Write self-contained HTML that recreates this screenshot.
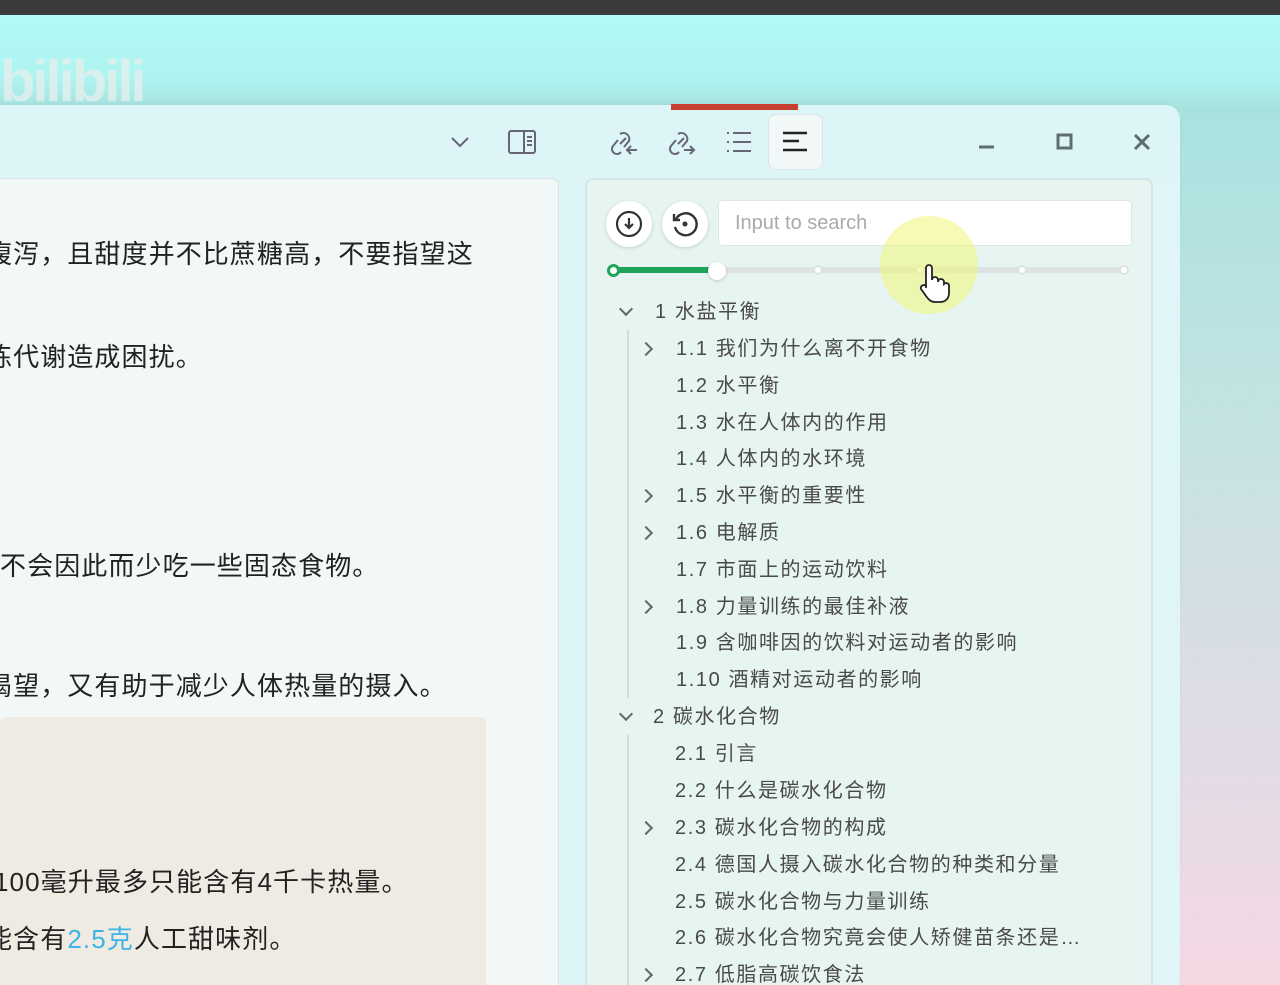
<!DOCTYPE html>
<html><head><meta charset="utf-8"><style>
*{margin:0;padding:0;box-sizing:border-box}
html{width:1280px;height:985px;overflow:hidden}
body{width:1280px;height:985px;overflow:hidden;position:relative;font-family:"Liberation Sans","Noto Sans CJK SC",sans-serif;background:linear-gradient(180deg,#b2fbf8 0%,#aef3f0 8%,#a8e2df 11%,#c6e3e3 45%,#dcdce6 70%,#f5d8e4 100%)}
.top{position:absolute;left:0;top:0;width:1280px;height:15px;background:#3a3a3a}
.logo{position:absolute;left:0;top:48px;font-size:58px;font-weight:bold;color:#e4f0ee;letter-spacing:-3px;opacity:.8}
.win{position:absolute;left:0;top:105px;width:1180px;height:880px;background:#def5f8;border-top-right-radius:14px;box-shadow:-2px 0 6px rgba(0,0,0,.08)}
.red{position:absolute;left:671px;top:104px;width:127px;height:6px;background:#c8402f}
.ico{position:absolute}
.left{position:absolute;left:-10px;top:178px;width:569px;height:820px;background:#f2f7f8;border:1px solid #d6e4e6;border-radius:8px}
.lt{position:absolute;font-size:26px;color:#222;white-space:nowrap;letter-spacing:1.1px}
.beige{position:absolute;left:0;top:717px;width:486px;height:280px;background:#efebe2;border-radius:6px}
.right{position:absolute;left:585px;top:178px;width:568px;height:820px;background:#e7f5f2;border:2px solid #d3e6e6;border-radius:8px}
.cb{position:absolute;top:201px;width:46px;height:46px;border-radius:50%;background:#fff;box-shadow:0 1px 4px rgba(0,0,0,.15)}
.search{position:absolute;left:718px;top:200px;width:414px;height:46px;background:#fff;border:1px solid #dde6e6;border-radius:4px;font-size:20px;color:#aaa;padding:11px 16px}
.tr{position:absolute;font-size:20px;color:#4a4a4a;white-space:nowrap;line-height:24px;letter-spacing:1.6px}
.chev{position:absolute;width:10px;height:10px;border-right:2px solid #666;border-bottom:2px solid #666}
</style></head><body>
<div class="top"></div>
<div class="logo">bilibili</div>
<div class="win"></div>
<div class="red"></div>
<svg class="ico" style="left:449px;top:132px" width="22" height="20"><path d="M3 6 L11 14 L19 6" stroke="#667" stroke-width="2" fill="none"/></svg>
<svg class="ico" style="left:507px;top:129px" width="30" height="26"><rect x="2" y="2" width="26" height="22" rx="2" stroke="#667" stroke-width="2" fill="none"/><path d="M17 2V24M20 8h5M20 12h5M20 16h5" stroke="#667" stroke-width="2"/></svg>
<svg class="ico" style="left:606px;top:126px" width="34" height="32"><path d="M14 8a6 6 0 0 1 9 7l-5 6M12 14l-5 6a5 5 0 0 0 8 6" stroke="#667" stroke-width="2" fill="none"/><path d="M14 18l6-6" stroke="#667" stroke-width="2"/><path d="M31 24h-9M25 20l-4 4 4 4" stroke="#667" stroke-width="2" fill="none"/></svg>
<svg class="ico" style="left:664px;top:126px" width="34" height="32"><path d="M14 8a6 6 0 0 1 9 7l-5 6M12 14l-5 6a5 5 0 0 0 8 6" stroke="#667" stroke-width="2" fill="none"/><path d="M14 18l6-6" stroke="#667" stroke-width="2"/><path d="M20 24h9M26 20l4 4-4 4" stroke="#667" stroke-width="2" fill="none"/></svg>
<svg class="ico" style="left:724px;top:130px" width="30" height="24"><path d="M3 3h2M3 12h2M3 21h2M9 3h18M9 12h18M9 21h18" stroke="#667" stroke-width="2"/></svg>
<div style="position:absolute;left:768px;top:114px;width:55px;height:56px;background:#f2f7f8;border-radius:8px;border:1px solid #d8e6e8"></div>
<svg class="ico" style="left:782px;top:131px" width="28" height="22"><path d="M1 2h24M1 10h16M1 19h24" stroke="#222" stroke-width="2.5"/></svg>
<svg class="ico" style="left:978px;top:140px" width="18" height="12"><path d="M1 7h15" stroke="#5e6e70" stroke-width="3"/></svg>
<svg class="ico" style="left:1056px;top:133px" width="18" height="18"><rect x="2" y="2" width="13" height="13" stroke="#5e6e70" stroke-width="3" fill="none"/></svg>
<svg class="ico" style="left:1133px;top:133px" width="18" height="18"><path d="M2 2l14 14M16 2L2 16" stroke="#5e6e70" stroke-width="3"/></svg>

<div class="left"></div>
<div class="beige"></div>
<div class="lt" style="left:-14px;top:234px">腹泻，且甜度并不比蔗糖高，不要指望这</div>
<div class="lt" style="left:-14px;top:337px">练代谢造成困扰。</div>
<div class="lt" style="left:0;top:546px">不会因此而少吃一些固态食物。</div>
<div class="lt" style="left:-14px;top:666px">渴望，又有助于减少人体热量的摄入。</div>
<div class="lt" style="left:-14px;top:806px">。</div>
<div class="lt" style="left:-6px;top:862px">100毫升最多只能含有4千卡热量。</div>
<div class="lt" style="left:-14px;top:919px">能含有<span style="color:#3bb4e6">2.5克</span>人工甜味剂。</div>

<div class="right"></div>
<div style="position:absolute;left:1153px;top:178px;width:27px;height:820px;background:#dff5f8"></div>
<div class="cb" style="left:606px"></div>
<svg class="ico" style="left:614px;top:209px" width="30" height="30"><circle cx="15" cy="15" r="12" stroke="#333" stroke-width="2.2" fill="none"/><path d="M15 9v10M11 15l4 4 4-4" stroke="#333" stroke-width="2.2" fill="none"/></svg>
<div class="cb" style="left:662px"></div>
<svg class="ico" style="left:670px;top:209px" width="30" height="30"><path d="M6 10a11 11 0 1 1-1 8" stroke="#333" stroke-width="2.4" fill="none"/><path d="M4 5v6h6" stroke="#333" stroke-width="2.4" fill="none"/><circle cx="15" cy="15" r="2.5" fill="#333"/></svg>
<div class="search">Input to search</div>
<div style="position:absolute;left:612px;top:267px;width:514px;height:6px;background:#dde3e2;border-radius:3px"></div>
<div style="position:absolute;left:612px;top:267px;width:105px;height:6px;background:#1ea55a;border-radius:3px"></div>
<div style="position:absolute;left:607px;top:264px;width:13px;height:13px;border-radius:50%;background:#fff;border:3px solid #1ea55a"></div>
<div style="position:absolute;left:708px;top:262px;width:18px;height:18px;border-radius:50%;background:#fff;box-shadow:0 1px 3px rgba(0,0,0,.2)"></div>
<div style="position:absolute;left:813px;top:265px;width:10px;height:10px;border-radius:50%;background:#fff;border:2px solid #dde3e2"></div>
<div style="position:absolute;left:915px;top:265px;width:10px;height:10px;border-radius:50%;background:#fff;border:2px solid #dde3e2"></div>
<div style="position:absolute;left:1017px;top:265px;width:10px;height:10px;border-radius:50%;background:#fff;border:2px solid #dde3e2"></div>
<div style="position:absolute;left:1119px;top:265px;width:10px;height:10px;border-radius:50%;background:#fff;border:2px solid #dde3e2"></div>
<div style="position:absolute;left:880px;top:216px;width:98px;height:98px;border-radius:50%;background:rgba(240,245,120,.55)"></div>
<svg class="ico" style="left:917px;top:262px" width="34" height="42"><path d="M9 26V6a3 3 0 0 1 6 0v12a3 3 0 0 1 6 0v2a3 3 0 0 1 6 0v2a3 3 0 0 1 5 1v8c0 6-4 9-9 9h-5c-4 0-6-2-9-6l-5-7a3 3 0 0 1 5-3z" fill="#fff" stroke="#222" stroke-width="1.8"/></svg>

<div style="position:absolute;left:627px;top:330px;width:2px;height:368px;background:#d2dcda"></div>
<div style="position:absolute;left:627px;top:735px;width:2px;height:260px;background:#d2dcda"></div>

<div class="chev" style="left:621px;top:304px;transform:rotate(45deg)"></div>
<div class="tr" style="left:655px;top:300px">1 水盐平衡</div>
<div class="chev" style="left:641px;top:344px;transform:rotate(-45deg)"></div>
<div class="tr" style="left:676px;top:337px">1.1 我们为什么离不开食物</div>
<div class="tr" style="left:676px;top:374px">1.2 水平衡</div>
<div class="tr" style="left:676px;top:411px">1.3 水在人体内的作用</div>
<div class="tr" style="left:676px;top:447px">1.4 人体内的水环境</div>
<div class="chev" style="left:641px;top:491px;transform:rotate(-45deg)"></div>
<div class="tr" style="left:676px;top:484px">1.5 水平衡的重要性</div>
<div class="chev" style="left:641px;top:528px;transform:rotate(-45deg)"></div>
<div class="tr" style="left:676px;top:521px">1.6 电解质</div>
<div class="tr" style="left:676px;top:558px">1.7 市面上的运动饮料</div>
<div class="chev" style="left:641px;top:602px;transform:rotate(-45deg)"></div>
<div class="tr" style="left:676px;top:595px">1.8 力量训练的最佳补液</div>
<div class="tr" style="left:676px;top:631px">1.9 含咖啡因的饮料对运动者的影响</div>
<div class="tr" style="left:676px;top:668px">1.10 酒精对运动者的影响</div>
<div class="chev" style="left:621px;top:709px;transform:rotate(45deg)"></div>
<div class="tr" style="left:653px;top:705px">2 碳水化合物</div>
<div class="tr" style="left:675px;top:742px">2.1 引言</div>
<div class="tr" style="left:675px;top:779px">2.2 什么是碳水化合物</div>
<div class="chev" style="left:641px;top:823px;transform:rotate(-45deg)"></div>
<div class="tr" style="left:675px;top:816px">2.3 碳水化合物的构成</div>
<div class="tr" style="left:675px;top:853px">2.4 德国人摄入碳水化合物的种类和分量</div>
<div class="tr" style="left:675px;top:890px">2.5 碳水化合物与力量训练</div>
<div class="tr" style="left:675px;top:926px">2.6 碳水化合物究竟会使人矫健苗条还是…</div>
<div class="chev" style="left:641px;top:970px;transform:rotate(-45deg)"></div>
<div class="tr" style="left:675px;top:963px">2.7 低脂高碳饮食法</div>
</body></html>
